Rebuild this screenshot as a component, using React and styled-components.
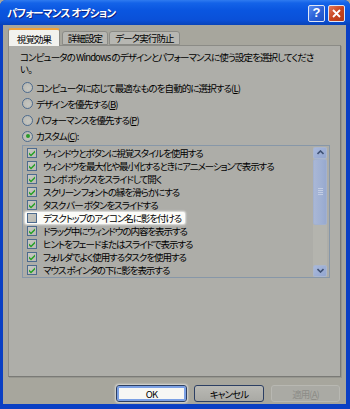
import React from "react";
import styled, { createGlobalStyle } from "styled-components";

const FONT = `"Noto Sans CJK JP", "Liberation Sans", sans-serif`;

const GlobalStyle = createGlobalStyle`
  html, body {
    margin: 0;
    padding: 0;
    background: #a7a69d;
  }
  body {
    font-family: ${FONT};
    font-size: 9.5px;
    line-height: 12px;
    letter-spacing: -0.9px;
    font-feature-settings: "palt";
    color: #000;
  }
`;

const EFFECTS = [
  { label: "ウィンドウとボタンに視覚スタイルを使用する", checked: true },
  { label: "ウィンドウを最大化や最小化するときにアニメーションで表示する", checked: true },
  { label: "コンボ ボックスをスライドして開く", checked: true },
  { label: "スクリーン フォントの縁を滑らかにする", checked: true },
  { label: "タスク バー ボタンをスライドする", checked: true },
  { label: "デスクトップのアイコン名に影を付ける", checked: false, focused: true },
  { label: "ドラッグ中にウィンドウの内容を表示する", checked: true },
  { label: "ヒントをフェードまたはスライドで表示する", checked: true },
  { label: "フォルダでよく使用するタスクを使用する", checked: true },
  { label: "マウス ポインタの下に影を表示する", checked: true },
];

const RADIOS = [
  { text: "コンピュータに応じて最適なものを自動的に選択する", key: "L" },
  { text: "デザインを優先する", key: "B" },
  { text: "パフォーマンスを優先する", key: "P" },
  { text: "カスタム", key: "C", checked: true, colon: true },
];

const Check = () => (
  <svg width="8" height="8" viewBox="0 0 8 8">
    <path d="M1 3.5 L3 5.5 L7 1.5 L7 3.5 L3 7.5 L1 5.5 Z" fill="#21a121" />
  </svg>
);

const App = () => {
  return (
    <>
      <GlobalStyle />
      <Window>
        <TitleBar>
          <Title>パフォーマンス オプション</Title>
          <CaptionButtons>
            <CaptionButton>?</CaptionButton>
            <CaptionButton close>
              <svg width="9" height="9" viewBox="0 0 9 9">
                <path d="M1 1 L8 8 M8 1 L1 8" stroke="#fff" strokeWidth="1.8" />
              </svg>
            </CaptionButton>
          </CaptionButtons>
        </TitleBar>

        <Body>
          <Tabs>
            <Tab active width={52}>視覚効果</Tab>
            <Tab width={46}>詳細設定</Tab>
            <Tab width={71}>データ実行防止</Tab>
          </Tabs>

          <Panel>
            <Intro>
              <Line>コンピュータの Windows のデザインとパフォーマンスに使う設定を選択してくださ</Line>
              <Line>い。</Line>
            </Intro>

            <RadioGroup>
              {RADIOS.map((r) => (
                <RadioRow key={r.key}>
                  <Radio>{r.checked && <Dot />}</Radio>
                  <span>
                    {r.text}(<u>{r.key}</u>){r.colon ? ":" : ""}
                  </span>
                </RadioRow>
              ))}
            </RadioGroup>

            <ListBox>
              <Items>
                {EFFECTS.map((e) => (
                  <ItemRow key={e.label}>
                    <Item focused={e.focused}>
                      <Box>{e.checked && <Check />}</Box>
                      <span>{e.label}</span>
                    </Item>
                  </ItemRow>
                ))}
              </Items>
              <ScrollBar>
                <ScrollButton>
                  <svg width="7" height="5" viewBox="0 0 7 5">
                    <path d="M0.5 4 L3.5 1 L6.5 4" stroke="#3f5275" strokeWidth="1.6" fill="none" />
                  </svg>
                </ScrollButton>
                <Track>
                  <Thumb>
                    <Grip />
                  </Thumb>
                </Track>
                <ScrollButton>
                  <svg width="7" height="5" viewBox="0 0 7 5">
                    <path d="M0.5 1 L3.5 4 L6.5 1" stroke="#3f5275" strokeWidth="1.6" fill="none" />
                  </svg>
                </ScrollButton>
              </ScrollBar>
            </ListBox>
          </Panel>

          <Footer>
            <Button primary>OK</Button>
            <Button>キャンセル</Button>
            <Button disabled>
              適用(<u>A</u>)
            </Button>
          </Footer>
        </Body>
      </Window>
    </>
  );
};

const Window = styled.div`
  width: 350px;
  height: 409px;
  box-sizing: border-box;
  display: flex;
  flex-direction: column;
  background: #0a3fc4;
  padding: 0 4px 5px 3px;
  border-radius: 6px 6px 0 0;
  overflow: hidden;
`;

const TitleBar = styled.div`
  flex: none;
  box-sizing: border-box;
  height: 25px;
  margin: 0 -4px 0 -3px;
  padding: 0 5px 0 7px;
  display: flex;
  align-items: center;
  justify-content: space-between;
  background: linear-gradient(
    to bottom,
    #2f7bf0 0%,
    #1463e8 12%,
    #0a56e0 40%,
    #0a50d8 80%,
    #0843b8 100%
  );
`;

const Title = styled.div`
  color: #fff;
  font-weight: bold;
  font-size: 10.5px;
  letter-spacing: -0.7px;
  text-shadow: 1px 1px 0 #0b1f80;
`;

const CaptionButtons = styled.div`
  display: flex;
  gap: 3px;
  margin-top: 1px;
`;

const CaptionButton = styled.div`
  width: 15px;
  height: 15px;
  border: 1px solid #dfe6f5;
  border-radius: 2px;
  display: flex;
  align-items: center;
  justify-content: center;
  color: #fff;
  font-family: "Liberation Sans", sans-serif;
  font-weight: bold;
  font-size: 13px;
  letter-spacing: 0;
  background: ${(p) =>
    p.close
      ? "linear-gradient(135deg, #e2785c 0%, #c8451f 50%, #b33a18 100%)"
      : "linear-gradient(135deg, #5b8cf0 0%, #2c63d9 50%, #1e4fc4 100%)"};
`;

const Body = styled.div`
  flex: 1;
  min-height: 0;
  display: flex;
  flex-direction: column;
  background: #a7a69d;
  padding: 3px 6px 0 5px;
`;

const Tabs = styled.div`
  flex: none;
  display: flex;
  align-items: flex-end;
  height: 17px;
  gap: 1px;
  position: relative;
  z-index: 1;
`;

const Tab = styled.div`
  box-sizing: border-box;
  width: ${(p) => p.width}px;
  height: ${(p) => (p.active ? "18px" : "14px")};
  margin-bottom: ${(p) => (p.active ? "-1px" : "0")};
  padding-top: ${(p) => (p.active ? "1px" : "0")};
  margin-right: ${(p) => (p.active ? "1px" : "0")};
  display: flex;
  align-items: center;
  justify-content: center;
  background: ${(p) => (p.active ? "#f2f2ee" : "#b7b7b2")};
  border: 1px solid #8b8b86;
  border-bottom: ${(p) => (p.active ? "none" : "1px solid #8b8b86")};
  border-top: ${(p) => (p.active ? "2px solid #f0a23a" : "1px solid #8b8b86")};
  border-radius: 3px 3px 0 0;
`;

const Panel = styled.div`
  flex: none;
  box-sizing: border-box;
  width: 333px;
  height: 332px;
  background: #aeaea9;
  border: 1px solid #8b8b86;
  border-right-color: #7a7a76;
  border-bottom-color: #7a7a76;
  box-shadow: 1px 1px 0 #96968f;
  padding: 5px 9px 0 11px;
  display: flex;
  flex-direction: column;
`;

const Intro = styled.div`
  display: flex;
  flex-direction: column;
  margin-bottom: 6px;
`;

const Line = styled.div`
  height: 12px;
  white-space: nowrap;
`;

const RadioGroup = styled.div`
  display: flex;
  flex-direction: column;
  gap: 3.3px;
  margin-left: 2px;
`;

const RadioRow = styled.div`
  display: flex;
  align-items: center;
  gap: 3px;
  height: 13px;
  white-space: nowrap;
`;

const Radio = styled.div`
  box-sizing: border-box;
  width: 11px;
  height: 11px;
  border-radius: 50%;
  border: 1px solid #4d6b8e;
  background: radial-gradient(circle at 60% 60%, #c6c6c0, #b5b5af);
  display: flex;
  align-items: center;
  justify-content: center;
`;

const Dot = styled.div`
  width: 4px;
  height: 4px;
  border-radius: 50%;
  background: #2a9a2a;
`;

const ListBox = styled.div`
  flex: none;
  box-sizing: border-box;
  margin-top: 2px;
  margin-left: 2px;
  width: 308px;
  height: 133px;
  border: 1px solid #8797a8;
  background: #adada8;
  display: flex;
  padding: 1px 2px 0 0;
`;

const Items = styled.div`
  flex: 1;
  min-width: 0;
  display: flex;
  flex-direction: column;
  padding: 0 0 0 2px;
  letter-spacing: -1.05px;
`;

const ItemRow = styled.div`
  height: 13.1px;
  display: flex;
  align-items: center;
`;

const Item = styled.div`
  display: flex;
  align-items: center;
  gap: 6px;
  padding: 0 4px 0 2px;
  height: 12px;
  white-space: nowrap;
  background: ${(p) => (p.focused ? "#fbfbf8" : "transparent")};
  border-radius: 2px;
  box-shadow: ${(p) => (p.focused ? "0 0 2px 1px rgba(255,255,255,0.7)" : "none")};
`;

const Box = styled.div`
  box-sizing: border-box;
  width: 10px;
  height: 10px;
  border: 1px solid #4d6b8e;
  background: linear-gradient(135deg, #c9c9c3, #b9b9b3);
  display: flex;
  align-items: center;
  justify-content: center;
`;

const ScrollBar = styled.div`
  flex: none;
  width: 14px;
  display: flex;
  flex-direction: column;
  background: #b4b4ae;
`;

const ScrollButton = styled.div`
  box-sizing: border-box;
  height: 12px;
  border: 1px solid #a9b6cf;
  border-radius: 2px;
  background: linear-gradient(135deg, #a9b9dc, #93a6cf);
  display: flex;
  align-items: center;
  justify-content: center;
`;

const Track = styled.div`
  flex: 1;
`;

const Thumb = styled.div`
  box-sizing: border-box;
  height: 66px;
  border: 1px solid #a2b1cf;
  border-radius: 2px;
  background: linear-gradient(to right, #a9b7d6, #9fb0d3 60%, #97a9cf);
  display: flex;
  align-items: center;
  justify-content: center;
`;

const Grip = styled.div`
  width: 5px;
  height: 7px;
  background: repeating-linear-gradient(
    to bottom,
    #c3cde3 0px,
    #c3cde3 1px,
    transparent 1px,
    transparent 2px
  );
`;

const Footer = styled.div`
  flex: none;
  display: flex;
  justify-content: flex-end;
  gap: 7px;
  margin-top: 8px;
`;

const Button = styled.div`
  box-sizing: border-box;
  width: ${(p) => (p.primary ? "71px" : p.disabled ? "69px" : "70px")};
  height: 17px;
  display: flex;
  align-items: center;
  justify-content: center;
  border-radius: 3px;
  color: ${(p) => (p.disabled ? "#8d8d88" : "#000")};
  border: 1px solid ${(p) => (p.disabled ? "#b8b8b2" : "#2c3f63")};
  background: ${(p) =>
    p.primary
      ? "#f7f7f4"
      : p.disabled
      ? "#aaaaa4"
      : "linear-gradient(to bottom, #b9b9b4, #a9a9a4)"};
  box-shadow: ${(p) =>
    p.primary ? "inset 0 0 0 2px #7ba0e4, 0 0 2px 1px rgba(255,255,255,0.6)" : "none"};
`;

export default App;
